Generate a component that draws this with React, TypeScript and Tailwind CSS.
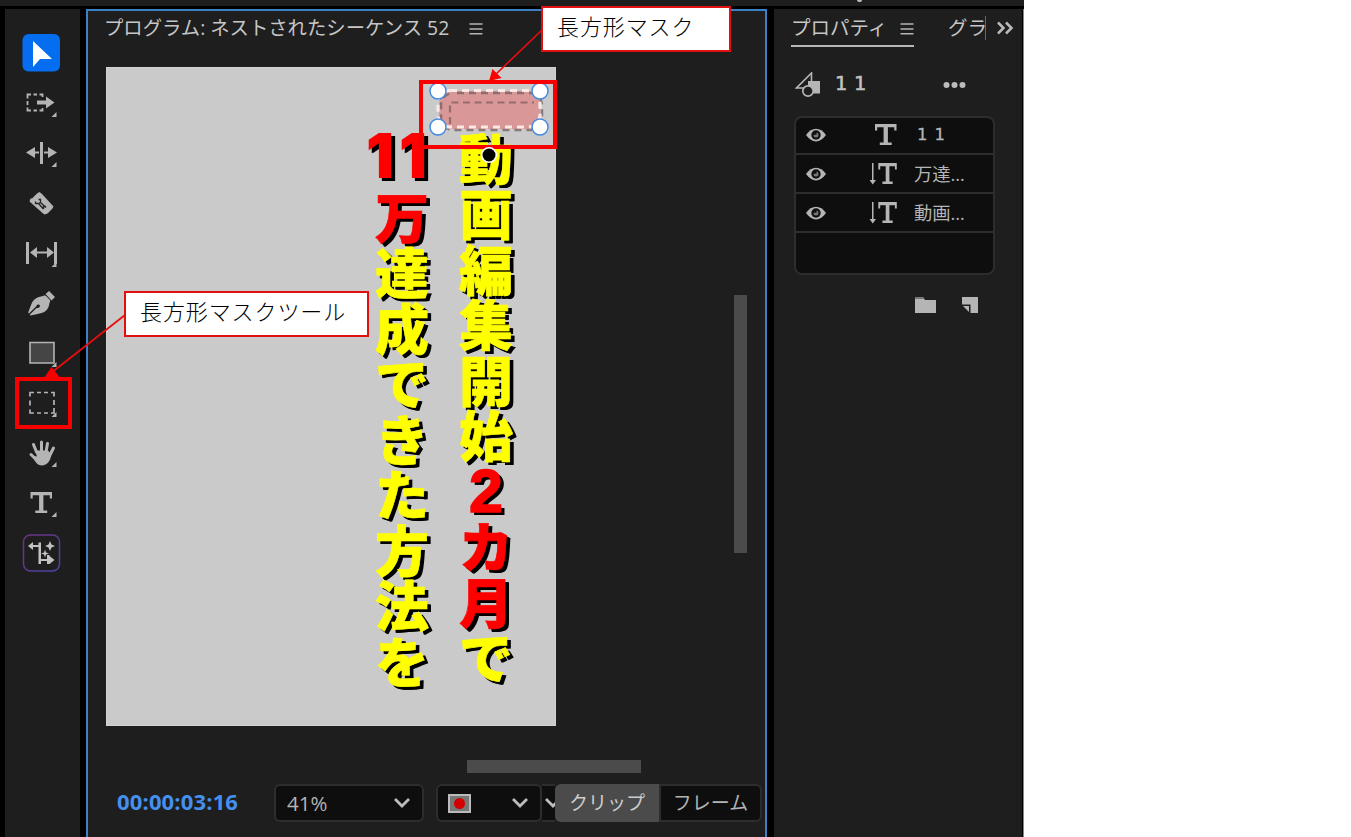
import React from "react";

type Glyph = { c: string; red?: boolean; latin?: boolean };

const sans = "font-['Open_Sans','Noto_Sans_CJK_JP',sans-serif]";
const jp = "font-['Noto_Sans_CJK_JP',sans-serif]";

const rightColumn: Glyph[] = [
  { c: "動" }, { c: "画" }, { c: "編" }, { c: "集" }, { c: "開" }, { c: "始" },
  { c: "2", red: true, latin: true }, { c: "カ", red: true }, { c: "月", red: true }, { c: "で" },
];
const leftColumn: Glyph[] = [
  { c: "万", red: true }, { c: "達" }, { c: "成" }, { c: "で" }, { c: "き" },
  { c: "た" }, { c: "方" }, { c: "法" }, { c: "を" },
];

function Telop({ glyphs }: { glyphs: Glyph[] }) {
  return (
    <div className="flex w-[60px] flex-col items-center text-[54px] font-black text-[#ffff00] [text-shadow:3px_3px_0_#000,4px_3px_0_#000] [-webkit-text-stroke:0.6px_currentColor]">
      {glyphs.map((g, i) => (
        <span
          key={i}
          className={`flex h-[55.5px] items-center justify-center leading-none ${g.red ? "text-[#ff0000]" : ""} ${g.latin ? "pt-[3px] font-['Liberation_Sans'] text-[61px] [-webkit-text-stroke:1.500px_currentColor]" : ""}`}
        >
          {g.c}
        </span>
      ))}
    </div>
  );
}

function Tool({ children, corner = true }: { children: React.ReactNode; corner?: boolean }) {
  return (
    <svg viewBox="0 0 40 40" className="h-10 w-10 shrink-0" fill="#b4b4b4">
      {children}
      {corner && <path d="M35.500 28v5h-5z" />}
    </svg>
  );
}

const serifT = "M8.500 8h21.500v6.500h-2.200v-3.300h-6.400v15.300h3.800v2.500H13.300v-2.500h3.800V11.200h-6.400v3.300H8.500z";

function Tools() {
  return (
    <aside className="flex w-[75px] shrink-0 flex-col items-center gap-[10px] bg-[#1e1e1e] pr-[3px] pt-[25px]">
      <svg viewBox="0 0 40 40" className="-mt-px mb-px h-10 w-10 shrink-0">
        <rect x="1.500" y="1" width="37.500" height="37.500" rx="6" fill="#056df0" />
        <path d="M12 8v26l7-8h12z" fill="#fff" />
      </svg>
      <Tool>
        <path d="M6.500 14.500V10.500H10M12.500 10.500h3.500M18.500 10.500h3v2.500M6.500 17v4M6.500 23.500v3H10M12.500 26.500h3.500M18.500 26.500h3V24" fill="none" stroke="#b4b4b4" strokeWidth="1.800" />
        <path d="M16 16.500h9v-4l8.500 6-8.500 6v-4h-9z" />
      </Tool>
      <Tool>
        <path d="M19 8h3v22h-3zM5 18.500l9-5.500v4.500h4v2h-4V24zM36 18.500L27 13v4.500h-4v2h4V24z" />
      </Tool>
      <Tool corner={false}>
        <path d="M18.500 8l2.500 2 11.500 12.500-1 2-5 5-3 1L21.500 29 8.500 17.500l1-3 1.500 0 5-5z" />
        <path d="M14.500 17.500v2h3l5 5.500M17.500 15.500h2v3l5.500 5M17.500 19.500l2-1M22.500 25v-2.500h2.500" fill="none" stroke="#242424" strokeWidth="1.300" />
      </Tool>
      <Tool>
        <path d="M5 8h3v22H5zM33 8h3v22h-3zM9 18.500l7-5.500v4.500h10V13l7 5.500-7 5.500v-4.500H16V24z" />
      </Tool>
      <Tool corner={false}>
        <path d="M24.500 9l3.500-3 6 6-3.500 3.500zM22 11c3-1 3 0 5 2s3 2 1.500 5c-1 8-6 10-12 11l-7 1.500-.8-.8 6.800-6.700c4 .5 4.500-4 1.500-3.500-2 .3-1 2-2.500 2.500l-6.500 6.500-.8-1L10 20c2-6 6-8 12-9z" transform="translate(0 1)" />
      </Tool>
      <Tool>
        <path d="M9 8.500h24v20.500H9z" fill="#454545" stroke="#b4b4b4" strokeWidth="1.600" />
      </Tool>
      <Tool>
        <path d="M9 12.500V8.500h4M16 8.500h4M23 8.500h4M30 8.500h3v4M33 16v5M33 24v5h-3M27 29h-4M20 29h-4M13 29H9v-3.500M9 21.500v-5" fill="none" stroke="#b4b4b4" strokeWidth="1.700" />
      </Tool>
      <Tool>
        <path d="M15.500 18l-3-7.500M20.500 17V8M25 18l1.500-8.500M28.500 22l4-8M15.500 26L10 20.500" stroke="#b4b4b4" strokeWidth="3" strokeLinecap="round" />
        <path d="M14 16.500h13L30 20c.5 6-4 11.500-9 11.500s-7-4-10-10l5 1z" />
      </Tool>
      <Tool><path d={serifT} transform="translate(1 0)" /></Tool>
      <svg viewBox="0 0 40 40" className="h-10 w-10 shrink-0" fill="#c2c2c2">
        <defs>
          <linearGradient id="edge" x1="0" y1="0" x2="1" y2="1">
            <stop offset="0" stopColor="#703080" /><stop offset="1" stopColor="#4545a5" />
          </linearGradient>
        </defs>
        <rect x="2.500" y="1" width="36" height="36" rx="7" fill="none" stroke="url(#edge)" strokeWidth="1.500" />
        <path d="M17.500 8.500H20V20h-2.500zM17.500 19H20v11h-2.500zM7 12l5-4v3h6v2h-6v3zM26 21h2.500v9H26zM19.500 25h9v-3l5 4-5 4v-3h-9zM29 7l1.500 3.500L34 12l-3.500 1.500L29 17l-1.500-3.500L24 12l3.500-1.500zM24 15.500l1 3 3 1-3 1-1 3-1-3-3-1 3-1z" />
      </svg>
    </aside>
  );
}

function Menu({ className }: { className: string }) {
  return (
    <svg viewBox="0 0 14 14" className={`h-[14px] w-[14px] ${className}`}>
      <path d="M.5 2h13M.5 7h13M.5 11.800h13" stroke="#b4b4b4" strokeWidth="1.600" />
    </svg>
  );
}

function Chevron({ className = "" }: { className?: string }) {
  return (
    <svg viewBox="0 0 18 12" className={`h-3 w-[18px] shrink-0 ${className}`}>
      <path d="M2 2l7 7 7-7" fill="none" stroke="#bdbdbd" strokeWidth="2.800" />
    </svg>
  );
}

function Mask() {
  return (
    <svg viewBox="0 0 138 70" className="absolute left-[419px] top-[80px] h-[70px] w-[138px]">
      <rect x="20" y="11" width="101" height="38" rx="13" fill="#d99797" />
      <rect x="22" y="13" width="101" height="37" rx="12" fill="none" stroke="#7a6464" strokeOpacity=".8" strokeWidth="2.500" strokeDasharray="7 5" strokeDashoffset="8" />
      <rect x="19" y="10.500" width="102" height="36.500" rx="12" fill="none" stroke="#fbe9e6" strokeWidth="3.200" strokeDasharray="7 5" />
      <path d="M31 44V22.500h84" fill="none" stroke="#976c6c" strokeWidth="2.200" strokeDasharray="7 4.500" />
      {[[19, 11], [121, 11], [19, 47], [121, 47]].map(([x, y]) => (
        <circle key={`${x}-${y}`} cx={x} cy={y} r="8" fill="#fff" stroke="#438ae0" strokeWidth="1.500" />
      ))}
      <rect x="2" y="2" width="134" height="65" fill="none" stroke="#f90000" strokeWidth="4" />
    </svg>
  );
}

function Program() {
  return (
    <main className="flex w-[681px] shrink-0 flex-col border-2 border-b-0 border-[#3c80c7] bg-[#1e1e1e]">
      <header className="flex h-[56px] items-start pl-[16px] pt-[5px]">
        <h1 className={`w-[365px] shrink-0 whitespace-nowrap text-[19.350px] font-normal leading-6 text-[#c6c6c6] ${sans}`}>プログラム: ネストされたシーケンス 52</h1>
        <Menu className="mt-[6px]" />
      </header>
      <div className="flex h-[660px] pl-[18px]">
        <div className={`flex h-[659px] w-[450px] shrink-0 border border-[#d2d2d2] bg-[#cacaca] pl-[265px] ${jp}`}>
          <div className="w-[60px] pt-[53px]">
            <div className="-ml-[6px] h-[67px] whitespace-nowrap font-['Inter'] text-[62px] font-black leading-[70px] tracking-[5px] text-[#ff0000] [text-shadow:3px_3px_0_#000,4px_3px_0_#000]">11</div>
            <Telop glyphs={leftColumn} />
          </div>
          <div className="ml-[24px] pt-[61px]"><Telop glyphs={rightColumn} /></div>
        </div>
        <div className="ml-[178px] mt-[228px] h-[258px] w-[13px] bg-[#4b4b4b]" />
      </div>
      <div className="ml-[379px] mt-[33px] h-[13px] w-[174px] shrink-0 bg-[#4b4b4b]" />
      <footer className={`mt-[11px] flex h-[38px] shrink-0 items-center pl-[29px] ${sans}`}>
        <span className="mb-[3px] w-[157px] shrink-0 whitespace-nowrap text-[22px] font-bold tracking-[0.150px] text-[#4590ed]">00:00:03:16</span>
        <div className="flex h-[38px] w-[150px] shrink-0 items-center justify-between rounded-md border-2 border-[#2d2d2d] bg-[#0e0e0e] pl-[11px] pr-[11px] text-[20.500px] text-[#b4b4b4]">41%<Chevron /></div>
        <div className="ml-3 flex h-[38px] w-[106px] shrink-0 items-center justify-between rounded-md border-2 border-[#2d2d2d] bg-[#0e0e0e] pl-[10px] pr-[11px]">
          <svg viewBox="0 0 23 19" className="h-[19px] w-[23px]"><path d="M1 1h21v17H1z" fill="#777" stroke="#bbb" strokeWidth="2" /><circle cx="11.500" cy="9.500" r="5.500" fill="#d20000" /></svg>
          <Chevron />
        </div>
        <div className="flex h-[38px] w-[13px] shrink-0 items-center overflow-hidden border-y-2 border-[#2d2d2d] bg-[#0e0e0e] pl-[2px]"><Chevron /></div>
        <div className="flex h-[38px] w-[104px] shrink-0 items-center justify-center rounded-l-md bg-[#4b4b4b] text-[19px] text-[#ccc]">クリップ</div>
        <div className="flex h-[38px] w-[103px] shrink-0 items-center justify-center rounded-r-md border-2 border-[#2d2d2d] bg-[#0e0e0e] text-[19px] text-[#b4b4b4]">フレーム</div>
      </footer>
    </main>
  );
}

function Layer({ name, vertical = false }: { name: string; vertical?: boolean }) {
  return (
    <div className="flex h-[39px] items-center border-b-2 border-[#2d2d2d] pl-[10px]">
      <svg viewBox="0 0 20 14" className="h-[14px] w-5 shrink-0">
        <path d="M0 7C6-1.500 14-1.500 20 7c-6 8.500-14 8.500-20 0" fill="#b5b5b5" /><circle cx="10" cy="7" r="4.700" fill="#111" /><path d="M7.500 7a2.500 2.500 0 105 0c0-1.500-1-2.500-2-2.500v2.200H8z" fill="#777" />
      </svg>
      <svg viewBox="0 0 32 24" className="ml-[42px] h-6 w-8 shrink-0" fill="#b5b5b5">
        <path d={serifT} transform={vertical ? "translate(3 -7) scale(.86 1)" : "translate(-1.500 -7)"} />
        {vertical && <path d="M4 1h1.500v17H8l-3.250 4.500L1.500 18H4z" />}
      </svg>
      <span className={`whitespace-nowrap text-[#b5b5b5] ${vertical ? `ml-[14px] text-[18.300px] ${sans}` : "ml-[17px] mt-[2px] font-['DejaVu_Sans'] text-[16.500px] tracking-[7px] [-webkit-text-stroke:0.3px_currentColor]"}`}>{name}</span>
    </div>
  );
}

function Properties() {
  return (
    <section className="flex w-[248px] shrink-0 flex-col bg-[#1e1e1e] pl-[17px]">
      <div className={`flex h-[38px] text-[19.500px] leading-6 text-[#c6c6c6] ${sans}`}>
        <div className="flex w-[123px] shrink-0 border-b-2 border-[#b8b8b8] pt-[7px]">
          <span className="w-[110px] whitespace-nowrap">プロパティ</span><Menu className="mt-[6px] shrink-0" />
        </div>
        <div className="ml-[34px] mt-[7px] h-[24px] w-[38px] overflow-hidden whitespace-nowrap border-r border-[#666]">グラ</div>
        <svg viewBox="0 0 18 14" className="ml-[10px] mt-[12px] h-[14px] w-[18px]"><path d="M2 1.500L7.500 7 2 12.500M10 1.500L15.500 7 10 12.500" fill="none" stroke="#bbb" strokeWidth="2.500" /></svg>
      </div>
      <div className="flex h-[69px] items-center pl-1">
        <svg viewBox="0 0 28 26" className="mt-[7px] h-[26px] w-7" fill="none" stroke="#b5b5b5">
          <path d="M13 9h12v12.500H13z" fill="#b5b5b5" stroke="none" /><path d="M9 16H1.500L16.500 1v9" strokeWidth="1.600" /><circle cx="13" cy="19" r="5.200" fill="#1e1e1e" strokeWidth="1.700" />
        </svg>
        <span className="ml-[12px] mt-[5px] w-[108px] whitespace-nowrap font-['DejaVu_Sans'] text-[19.500px] tracking-[6.700px] text-[#c2c2c2] [-webkit-text-stroke:0.500px_currentColor]">11</span>
        <svg viewBox="0 0 24 8" className="mt-[7px] h-2 w-6" fill="#bbb"><circle cx="3.500" cy="4" r="3" /><circle cx="11.500" cy="4" r="3" /><circle cx="19.500" cy="4" r="3" /></svg>
      </div>
      <div className="ml-[3px] h-[159px] w-[201px] rounded-lg border-2 border-[#2d2d2d] bg-[#0e0e0e]">
        <div className="-mt-[2px]"><Layer name="11" /><Layer name="万達…" vertical /><Layer name="動画…" vertical /></div>
      </div>
      <div className="ml-[124px] mt-[21px] flex gap-[25px]">
        <svg viewBox="0 0 22 18" className="h-[18px] w-[22px]"><path d="M0 1h8l2 3h11v13H0z" fill="#b5b5b5" /><path d="M0 1h8l1 2H0z" fill="#777" /></svg>
        <svg viewBox="0 0 18 18" className="h-[18px] w-[18px]"><path d="M0 1h16v16H8.500V8.500H0z" fill="#b5b5b5" /><path d="M1 10h6v6z" fill="#b5b5b5" /></svg>
      </div>
    </section>
  );
}

function Callouts() {
  return (
    <>
      <svg viewBox="0 0 1024 837" className="pointer-events-none absolute left-0 top-0 h-[837px] w-[1024px]">
        <circle cx="489" cy="155" r="8" fill="#fff" /><circle cx="489" cy="155" r="6.500" fill="#000" />
        <path d="M542 30L495 75M125 315L51 373" stroke="#e80d0d" strokeWidth="1.700" />
        <path d="M489 81l3.500-12 9 9zM44 378l7.500-11 8 10z" fill="#f90000" />
        <path d="M17 379h53v48H17z" fill="none" stroke="#f90000" strokeWidth="4" />
      </svg>
      <div className={`absolute left-[541px] top-[6px] flex h-[46px] w-[190px] items-center border-2 border-[#e01010] bg-white pb-[7px] pl-[14px] text-[22px] font-light tracking-[0.900px] text-black ${jp}`}>長方形マスク</div>
      <div className={`absolute left-[124px] top-[291px] flex h-[46px] w-[245px] items-center border-2 border-[#e01010] bg-white pb-[7px] pl-[14px] text-[22px] font-light tracking-[0.900px] text-black ${jp}`}>長方形マスクツール</div>
    </>
  );
}

export default function App() {
  return (
    <div className="h-[837px] w-[1351px] overflow-hidden bg-white">
      <div className="relative flex h-full w-[1024px] flex-col overflow-hidden bg-black">
        <div className="flex h-[6px] shrink-0 bg-[#1e1e1e] pl-[857px]"><div className="h-[2px] w-[5px] rounded-b bg-[#bbb]" /></div>
        <div className="mt-[3px] flex min-h-0 flex-1 pl-[5px]">
          <Tools />
          <div className="w-[6px] shrink-0" />
          <Program />
          <div className="w-[7px] shrink-0" />
          <Properties />
          <div className="ml-auto w-px bg-[#888]" />
        </div>
        <Mask />
        <Callouts />
      </div>
    </div>
  );
}
